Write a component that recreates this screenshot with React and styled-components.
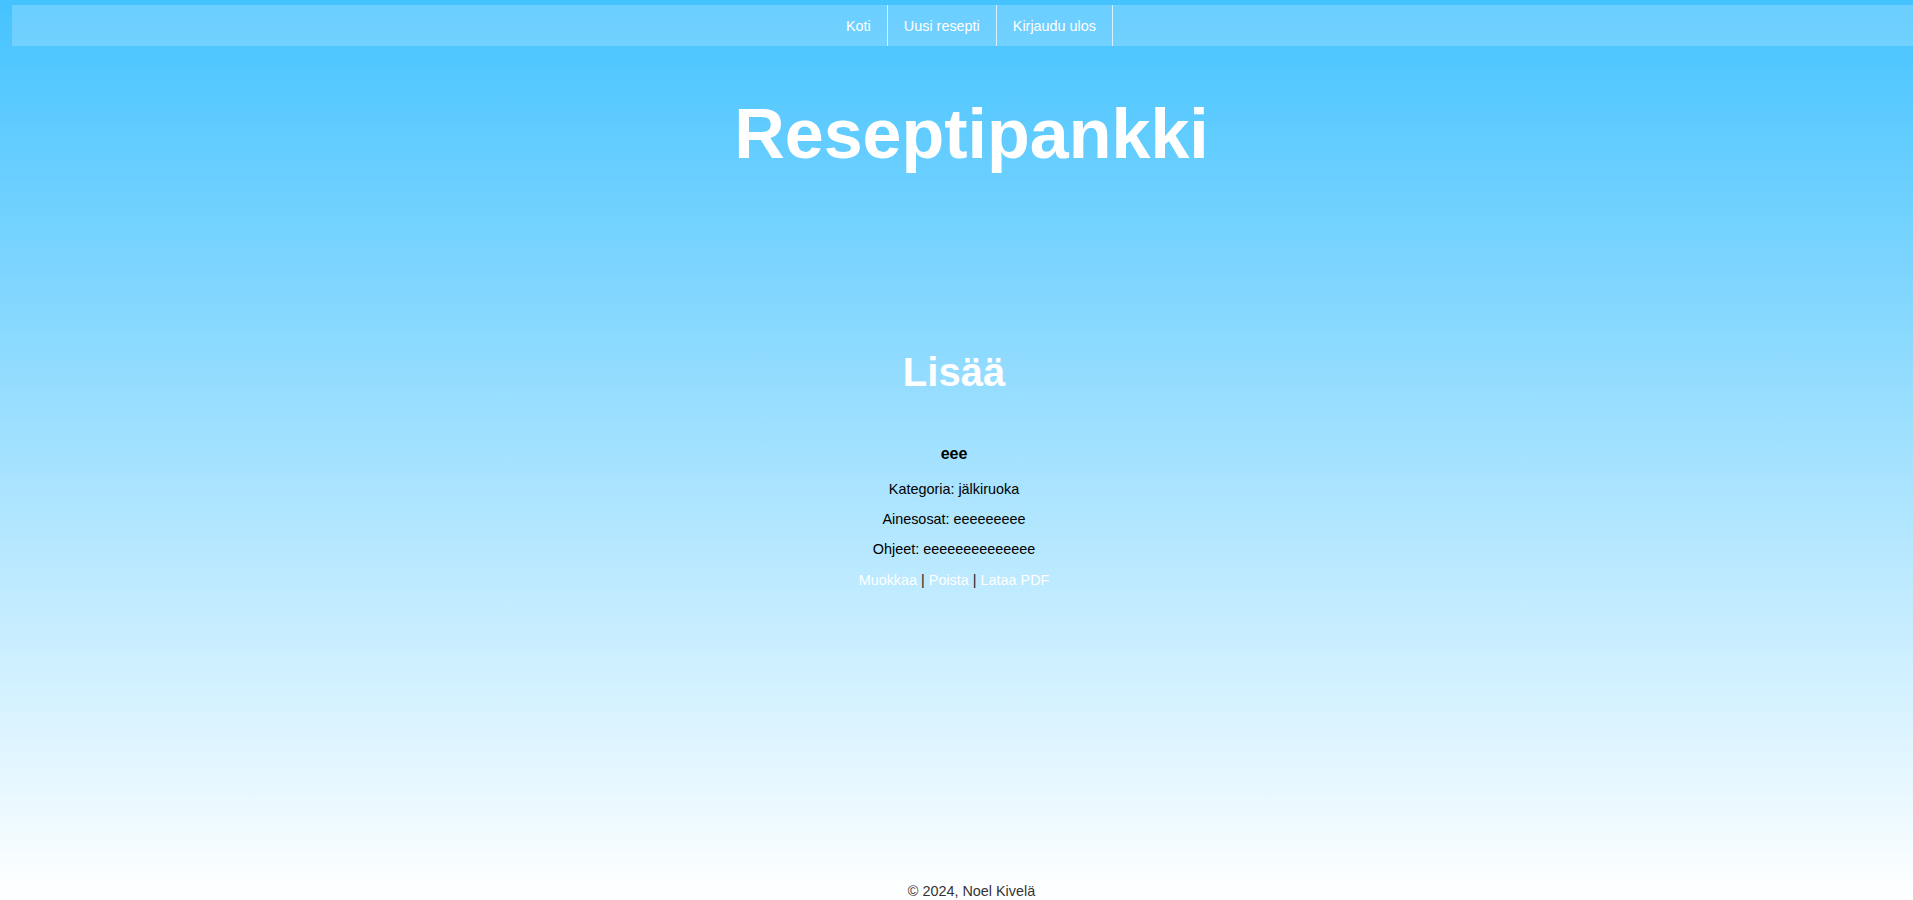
import React from 'react';
import styled, { createGlobalStyle } from 'styled-components';

const GlobalStyle = createGlobalStyle`
  html, body {
    margin: 0;
    padding: 0;
  }
  body {
    font-family: "Liberation Sans", Arial, sans-serif;
    background: linear-gradient(to bottom, #45c3ff 0%, #ffffff 100%);
    min-height: 100vh;
  }
`;

const Page = styled.div`
  min-height: 100vh;
  display: flex;
  flex-direction: column;
  box-sizing: border-box;
  padding-top: 5px;
`;

const Header = styled.header`
  display: flex;
  flex-direction: column;
`;

const Nav = styled.nav`
  margin-left: 12px;
  height: 41px;
  padding-left: 18px;
  background-color: rgba(255, 255, 255, 0.2);
  display: flex;
  justify-content: center;
  align-items: stretch;
`;

const NavLink = styled.a`
  display: flex;
  align-items: center;
  padding: 0 16px;
  font-size: 14.4px;
  color: #fff;
  text-decoration: none;
  border-right: 1px solid rgba(255, 255, 255, 0.7);
  cursor: pointer;
`;

const Title = styled.h1`
  margin: 48px 0 0;
  padding-left: 30px;
  text-align: center;
  font-size: 70px;
  font-weight: bold;
  color: #fff;
`;

const Main = styled.main`
  flex: 1;
  display: flex;
  flex-direction: column;
  align-items: center;
  text-align: center;
  padding-right: 5px;
`;

const SectionTitle = styled.h2`
  margin: 176px 0 0;
  font-size: 40px;
  font-weight: bold;
  color: #fff;
`;

const RecipeName = styled.h3`
  margin: 50px 0 18px;
  font-size: 16px;
  font-weight: bold;
  color: #000;
`;

const Detail = styled.p`
  margin: 0 0 14px;
  font-size: 14.4px;
  color: #000;
`;

const Actions = styled.div`
  margin-top: 1px;
  font-size: 14.4px;
  color: #222;
`;

const ActionLink = styled.a`
  color: #fff;
  text-decoration: none;
  cursor: pointer;
`;

const Footer = styled.footer`
  text-align: center;
  padding-left: 30px;
  font-size: 14.4px;
  color: #333;
  padding-bottom: 1px;
`;

const App = () => {
  const recipe = {
    name: 'eee',
    category: 'jälkiruoka',
    ingredients: 'eeeeeeeee',
    instructions: 'eeeeeeeeeeeeee'
  };

  return (
    <Page>
      <GlobalStyle />
      <Header>
        <Nav>
          <NavLink>Koti</NavLink>
          <NavLink>Uusi resepti</NavLink>
          <NavLink>Kirjaudu ulos</NavLink>
        </Nav>
        <Title>Reseptipankki</Title>
      </Header>

      <Main>
        <SectionTitle>Lisää</SectionTitle>

        {/* recipe card */}
        <RecipeName>{recipe.name}</RecipeName>
        <Detail>Kategoria: {recipe.category}</Detail>
        <Detail>Ainesosat: {recipe.ingredients}</Detail>
        <Detail>Ohjeet: {recipe.instructions}</Detail>
        <Actions>
          <ActionLink>Muokkaa</ActionLink> | <ActionLink>Poista</ActionLink> |{' '}
          <ActionLink>Lataa PDF</ActionLink>
        </Actions>
      </Main>

      <Footer>© 2024, Noel Kivelä</Footer>
    </Page>
  );
};

export default App;
